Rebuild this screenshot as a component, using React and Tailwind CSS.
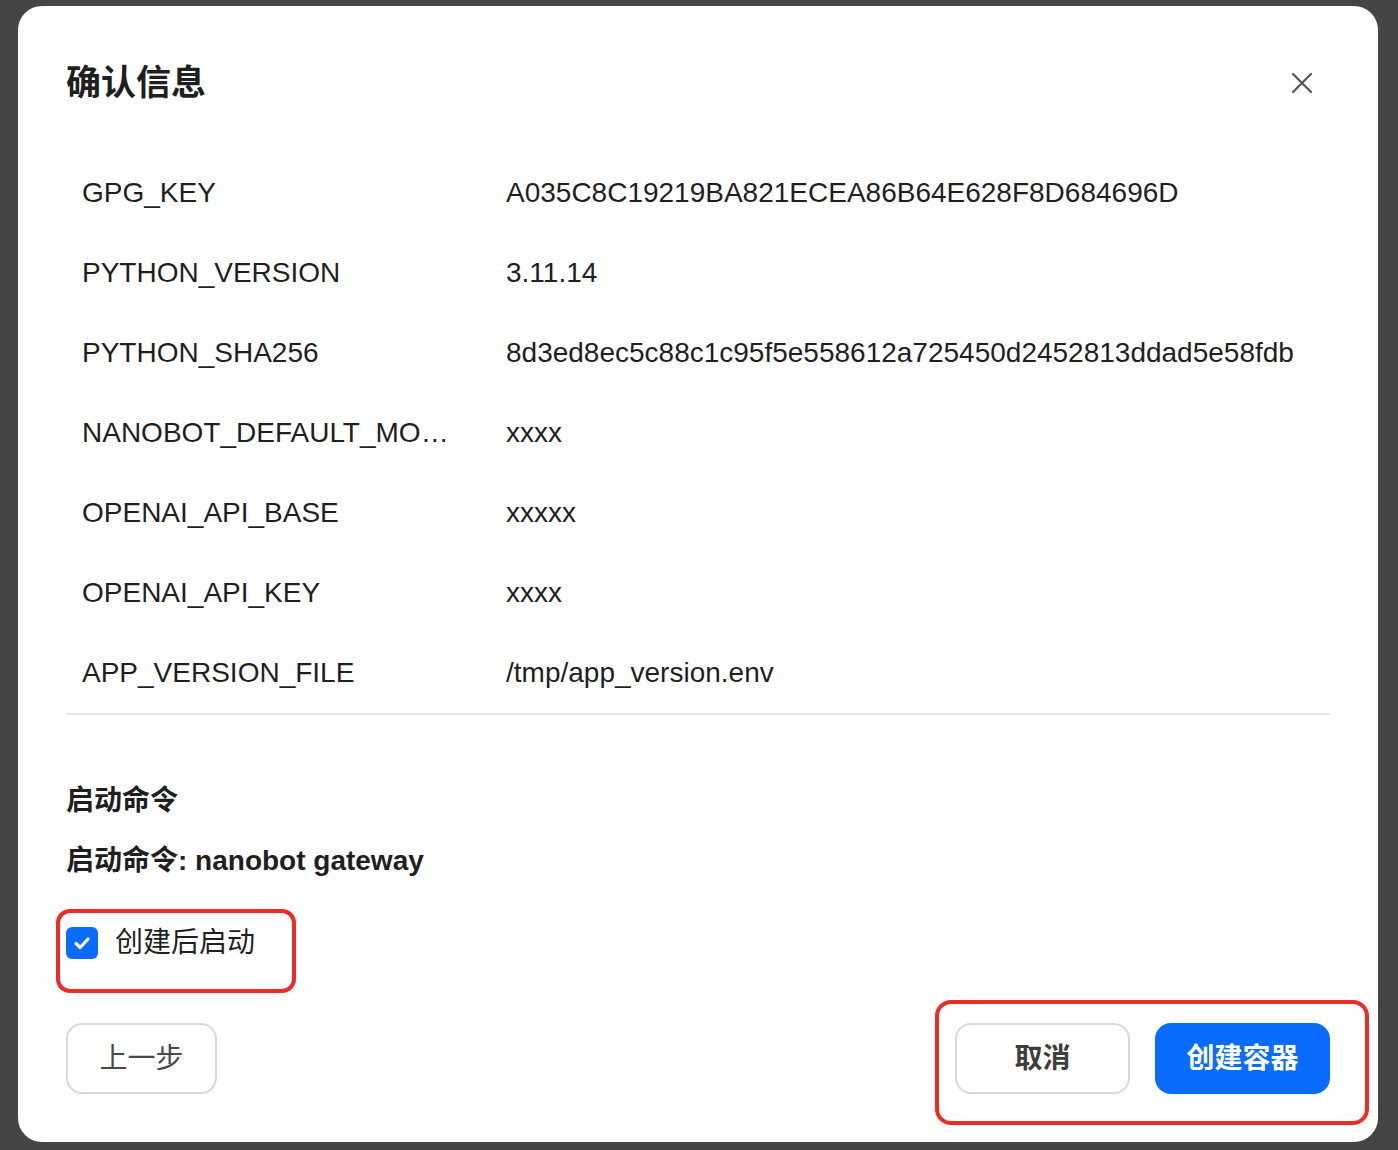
import React from "react";

const rows = [
  ["GPG_KEY", "A035C8C19219BA821ECEA86B64E628F8D684696D"],
  ["PYTHON_VERSION", "3.11.14"],
  ["PYTHON_SHA256", "8d3ed8ec5c88c1c95f5e558612a725450d2452813ddad5e58fdb"],
  ["NANOBOT_DEFAULT_MO…", "xxxx"],
  ["OPENAI_API_BASE", "xxxxx"],
  ["OPENAI_API_KEY", "xxxx"],
  ["APP_VERSION_FILE", "/tmp/app_version.env"],
];

const font = { fontFamily: '"Liberation Sans", "Noto Sans CJK SC", sans-serif' };

export default function App() {
  return (
    <div
      className="w-[1398px] h-[1150px] bg-[#454545] pt-[6px] pl-[18px] overflow-hidden"
      style={font}
    >
      <div className="w-[1360px] h-[1136px] bg-white rounded-[24px] px-[48px] pt-[53px] pb-[48px] flex flex-col text-[#1f1f1f]">
        {/* header */}
        <div className="flex items-center justify-between h-[48px]">
          <h1 className="text-[35px] leading-[48px] font-bold">确认信息</h1>
          <button className="w-[40px] h-[40px] flex items-center justify-center mr-[8px] text-[#555]">
            <svg width="22" height="22" viewBox="0 0 22 22" fill="none" stroke="currentColor" strokeWidth="2.2" strokeLinecap="round">
              <path d="M2 2L20 20M20 2L2 20" />
            </svg>
          </button>
        </div>

        {/* table */}
        <div className="mt-[46px] border-b-2 border-[#e6e6e6]">
          {rows.map(([k, v]) => (
            <div key={k} className="flex h-[80px] items-center text-[28px] leading-[40px]">
              <div className="w-[424px] px-[16px] whitespace-nowrap overflow-hidden">{k}</div>
              <div className="flex-1 px-[16px] whitespace-nowrap">{v}</div>
            </div>
          ))}
        </div>

        {/* command */}
        <div className="mt-[66px] text-[28px] leading-[40px] font-bold">启动命令</div>
        <div className="mt-[20px] text-[28px] leading-[40px] font-semibold">启动命令: nanobot gateway</div>

        {/* checkbox */}
        <div className="relative mt-[42px] flex items-center h-[40px]">
          <div className="w-[32px] h-[32px] rounded-[6px] bg-[#0b6bff] flex items-center justify-center">
            <svg width="20" height="20" viewBox="0 0 20 20" fill="none" stroke="white" strokeWidth="3.2" strokeLinecap="round" strokeLinejoin="round">
              <path d="M4 10.5L8.2 14.5L16 6" />
            </svg>
          </div>
          <span className="ml-[17px] text-[28px] leading-[40px]">创建后启动</span>
          <div className="absolute left-[-10px] top-[-14px] w-[240px] h-[84px] border-[4px] border-[#ee2b24] rounded-[14px] pointer-events-none" />
        </div>

        {/* footer */}
        <div className="mt-auto flex items-center justify-between">
          <button className="w-[151px] h-[71px] border-2 border-[#d9d9d9] rounded-[16px] text-[28px] text-[#4a4a4a]">
            上一步
          </button>
          <div className="relative flex items-center gap-[25px]">
            <button className="w-[175px] h-[71px] border-2 border-[#d9d9d9] rounded-[16px] text-[28px] font-bold text-[#3d3d3d]">
              取消
            </button>
            <button className="w-[175px] h-[71px] bg-[#0a6cff] rounded-[16px] text-[28px] font-bold text-white">
              创建容器
            </button>
            <div className="absolute left-[-20px] right-[-39px] top-[-23px] bottom-[-31px] border-[4px] border-[#ee2b24] rounded-[16px] pointer-events-none" />
          </div>
        </div>
      </div>
    </div>
  );
}
